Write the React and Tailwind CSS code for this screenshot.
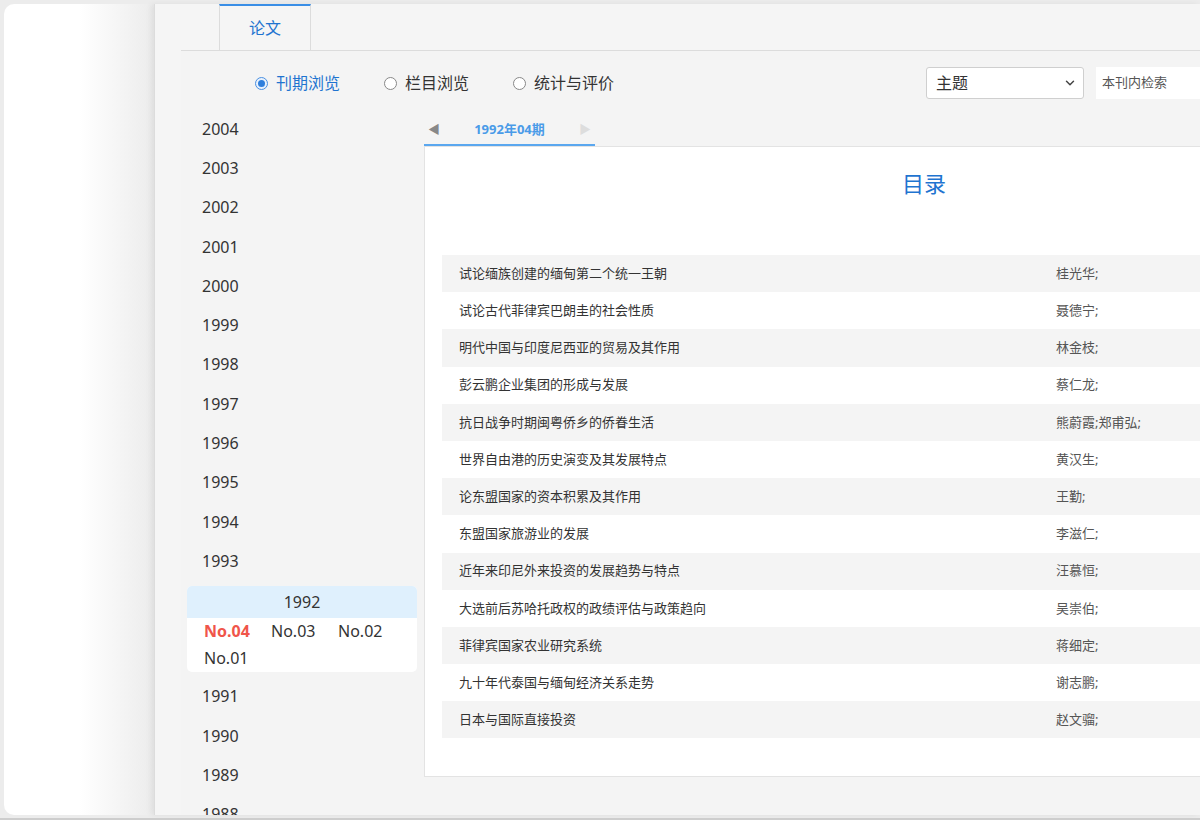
import { ChevronDown } from "lucide-react";

const years = ["2004", "2003", "2002", "2001", "2000", "1999", "1998", "1997", "1996", "1995", "1994", "1993"];
const olderYears = ["1991", "1990", "1989", "1988"];
const issues = ["No.04", "No.03", "No.02", "No.01"];

const articles = [
    ["试论缅族创建的缅甸第二个统一王朝", "桂光华;"],
    ["试论古代菲律宾巴朗圭的社会性质", "聂德宁;"],
    ["明代中国与印度尼西亚的贸易及其作用", "林金枝;"],
    ["彭云鹏企业集团的形成与发展", "蔡仁龙;"],
    ["抗日战争时期闽粤侨乡的侨眷生活", "熊蔚霞;郑甫弘;"],
    ["世界自由港的历史演变及其发展特点", "黄汉生;"],
    ["论东盟国家的资本积累及其作用", "王勤;"],
    ["东盟国家旅游业的发展", "李滋仁;"],
    ["近年来印尼外来投资的发展趋势与特点", "汪慕恒;"],
    ["大选前后苏哈托政权的政绩评估与政策趋向", "吴崇伯;"],
    ["菲律宾国家农业研究系统", "蒋细定;"],
    ["九十年代泰国与缅甸经济关系走势", "谢志鹏;"],
    ["日本与国际直接投资", "赵文骝;"],
];

function Radio({ label, checked }) {
    return (
        <label className="flex items-center gap-[8px] mr-[44px] cursor-pointer shrink-0 whitespace-nowrap">
            {checked ? (
                <span className="w-[13px] h-[13px] shrink-0 rounded-full border border-[#4a90e2] bg-[#e8f1fc] flex items-center justify-center">
                    <span className="w-[7px] h-[7px] rounded-full bg-[#2f7fdc]" />
                </span>
            ) : (
                <span className="w-[13px] h-[13px] shrink-0 rounded-full border-[1.5px] border-[#888] bg-white" />
            )}
            <span className={checked ? "text-[16px] text-[#1f74d0]" : "text-[16px] text-[#333]"}>{label}</span>
        </label>
    );
}

export default function App() {
    return (
        <div className="w-[1200px] h-[820px] overflow-hidden bg-[#ececec] border-b-[2px] border-[#cdcdcd] [font-family:'Noto_Sans','Noto_Sans_CJK_SC',sans-serif]">
            <div className="flex h-[811px] mt-[4px]">
                {/* left blank card */}
                <div className="w-[150px] ml-[4px] shrink-0 rounded-l-[10px] bg-gradient-to-r from-white via-white to-[#ececec]" />

                {/* main */}
                <div className="flex-1 min-w-0 bg-[#f5f5f5] border-l border-[#dcdcdc] overflow-hidden shadow-[-3px_0_6px_rgba(0,0,0,0.06)]">
                    {/* tab bar */}
                    <div className="h-[46px] pl-[64px] flex">
                        <div className="w-[92px] h-[46px] border-t-[2px] border-t-[#3a8ee6] border-x border-x-[#dcdcdc] flex items-center justify-center text-[16px] text-[#1f74d0]">
                            论文
                        </div>
                    </div>

                    <div className="ml-[26px] border-t border-[#dcdcdc] bg-[#f4f4f4] h-[765px]">
                        {/* radios and search */}
                        <div className="h-[58px] pt-[6px] flex items-center w-[1200px]">
                            <div className="flex items-center pl-[74px] shrink-0">
                                <Radio label="刊期浏览" checked />
                                <Radio label="栏目浏览" />
                                <Radio label="统计与评价" />
                            </div>
                            <div className="ml-[268px] w-[158px] h-[32px] shrink-0 bg-white border border-[#cfcfcf] rounded-[3px] flex items-center justify-between pl-[9px] pr-[6px] text-[16px] text-[#333]">
                                <span>主题</span>
                                <ChevronDown size={14} strokeWidth={2.5} className="text-[#444]" />
                            </div>
                            <div className="ml-[12px] w-[200px] h-[32px] bg-white flex items-center pl-[6px] text-[13px] text-[#555] shrink-0">
                                本刊内检索
                            </div>
                        </div>

                        <div className="flex">
                            {/* year list */}
                            <div className="w-[230px] ml-[6px] shrink-0 text-[16px] text-[#333]">
                                {years.map((y) => (
                                    <div key={y} className="h-[39.3px] flex items-center pl-[15px]">{y}</div>
                                ))}
                                <div className="mt-[5px] mb-[5px] rounded-[5px] bg-white overflow-hidden">
                                    <div className="h-[32px] bg-[#dff0fd] flex items-center justify-center">1992</div>
                                    <div className="flex flex-wrap pl-[17px] pr-[10px]">
                                        {issues.map((n, i) => (
                                            <span key={n} className={i === 0 ? "w-[67px] h-[27px] flex items-center font-bold text-[#f0554a]" : "w-[67px] h-[27px] flex items-center"}>
                                                {n}
                                            </span>
                                        ))}
                                    </div>
                                </div>
                                {olderYears.map((y) => (
                                    <div key={y} className="h-[39.3px] flex items-center pl-[15px]">{y}</div>
                                ))}
                            </div>

                            {/* contents */}
                            <div className="ml-[7px] pt-[6px] shrink-0">
                                <div className="w-[171px] h-[31px] border-b-[2px] border-[#5aa7ef] flex items-center justify-between px-[4px]">
                                    <span className="text-[12px] text-[#888]">◀</span>
                                    <span className="text-[13px] font-bold text-[#4a9be8]">1992年04期</span>
                                    <span className="text-[12px] text-[#ddd]">▶</span>
                                </div>
                                <div className="w-[1000px] h-[631px] bg-white border border-[#e3e3e3] px-[17px]">
                                    <div className="h-[108px] pt-[21px] text-center text-[22px] text-[#1f74d0] leading-[30px]">目录</div>
                                    <div className="text-[13px]">
                                        {articles.map(([t, a], i) => (
                                            <div key={t} className={i % 2 === 0 ? "h-[37.2px] flex items-center bg-[#f4f4f4]" : "h-[37.2px] flex items-center bg-white"}>
                                                <span className="w-[614px] pl-[17px] text-[#333]">{t}</span>
                                                <span className="text-[#555]">{a}</span>
                                            </div>
                                        ))}
                                    </div>
                                </div>
                            </div>
                        </div>
                    </div>
                </div>
            </div>
        </div>
    );
}
